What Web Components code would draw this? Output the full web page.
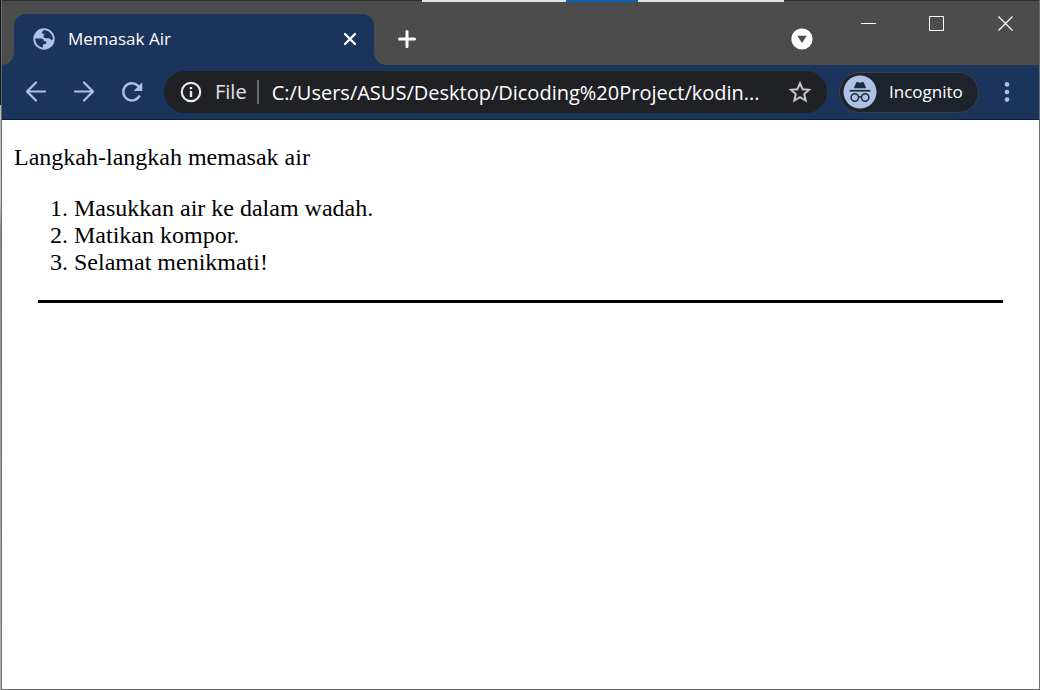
<!DOCTYPE html>
<html lang="id">
<head>
<meta charset="utf-8">
<title>Memasak Air</title>
<style>
html, body { height: 100%; margin: 0; }
body { background: #fff; }
</style>
</head>
<body>
<browser-window>
  <tab-strip slot="tabs"><browser-tab>Memasak Air</browser-tab></tab-strip>
  <nav-bar slot="toolbar"></nav-bar>
  <recipe-page></recipe-page>
</browser-window>

<script>
const define = (name, html) => customElements.define(name, class extends HTMLElement {
  constructor() {
    super();
    const t = document.createElement('template');
    t.innerHTML = html;
    this.attachShadow({ mode: 'open' }).append(t.content.cloneNode(true));
  }
});

const reset = `
  :host, * { box-sizing: border-box; }
  button { border: 0; padding: 0; margin: 0; background: none; color: inherit; font: inherit; display: grid; place-items: center; flex: none; }
  svg { display: block; }`;

define('browser-window', `<style>
  * { box-sizing: border-box; }
  :host { display: grid; grid-template-columns: 1px minmax(0, 1fr); min-height: 100%; height: 100%; }
  .behind { background: linear-gradient(#12161d 105px, #b9b9b9 105px, #c9c9c9 200px, #8e8e8e 230px, #b5b5b5); }
  .window { display: flex; flex-direction: column; border: 1px solid #6b6b6b; border-top: 0; background: #fff; }
  main { flex: 1; }
</style>
<div class="behind"></div>
<div class="window"><slot name="tabs"></slot><slot name="toolbar"></slot><main><slot></slot></main></div>`);

define('tab-strip', `<style>${reset}
  :host { display: block; background: #4c4c4c; color: #fff; }
  .edge { height: 2px; display: grid; grid-template-columns: 420fr 144fr 72fr 146fr 255fr; background: linear-gradient(#2e2e2e 1px, #4c4c4c 1px); }
  .edge i:nth-child(2), .edge i:nth-child(4) { background: #e4e4e4; }
  .edge i:nth-child(3) { background: #0d62b3; }
  .row { display: flex; height: 63px; padding-left: 12px; }
  .tabs { display: flex; padding-top: 12px; }
  .new { width: 32px; height: 32px; margin: 21px 0 0 17px; }
  .space { flex: 1; }
  .search { width: 32px; height: 32px; margin: 21px 17px 0 0; }
  .controls { display: flex; height: 42px; }
  .controls button { width: 68px; }
</style>
<div class="edge"><i></i><i></i><i></i><i></i><i></i></div>
<div class="row">
  <div class="tabs"><slot></slot></div>
  <button class="new" aria-label="New tab"><svg width="20" height="20" viewBox="0 0 20 20" stroke="#fff" stroke-width="3" stroke-linecap="round"><path d="M2.5 10h15M10 2.5v15"/></svg></button>
  <div class="space"></div>
  <button class="search" aria-label="Search tabs"><svg width="22" height="22" viewBox="0 0 22 22"><circle cx="11" cy="11" r="10.6" fill="#fff"/><path d="M6.3 7.7h9.4L11 15z" fill="#4c4c4c"/></svg></button>
  <div class="controls">
    <button aria-label="Minimize"><svg width="16" height="16"><path d="M0 8.5h15" stroke="#fff"/></svg></button>
    <button aria-label="Maximize"><svg width="16" height="16"><path d="M.5 1.5h14v14H.5z" fill="none" stroke="#fff"/></svg></button>
    <button aria-label="Close"><svg width="16" height="16"><path d="M1.5 1.500l14 14M15.500 1.500l-14 14" stroke="#fff" stroke-width="1.2"/></svg></button>
  </div>
</div>`);

define('browser-tab', `<style>${reset}
  :host { position: relative; display: flex; align-items: center; width: 360px; height: 51px; padding: 0 8px 2px 18px; border-radius: 12px 12px 0 0; background: #1a345b; color: #fff; font: 17px/24px "Open Sans", "Noto Sans", sans-serif; }
  :host::before, :host::after { content: ""; position: absolute; bottom: 0; width: 12px; height: 12px; }
  :host::before { right: 100%; background: radial-gradient(circle at 0 0, transparent 11.5px, #1a345b 12px); }
  :host::after { left: 100%; background: radial-gradient(circle at 100% 0, transparent 11.5px, #1a345b 12px); }
  .title { flex: 1; margin-left: 12px; white-space: nowrap; }
  button { width: 32px; height: 32px; }
</style>
<svg width="24" height="24" viewBox="0 0 24 24"><circle cx="12" cy="12" r="10.7" fill="#adc1e4"/><path d="M3.200 11.600h5.600c1.900 0 3 1 3.100 2.600h2.300c.6 1.600-.2 2.800-2 3.100l-1.300.3v3C6.700 20.300 3.200 16.500 3.200 11.600zM11.600 3.300c4.300-.2 7.700 2.400 8.800 6.200.4 1.300.5 2.200.4 3.300h-1.500c-1-.1-1.200-1-2-1.500h-2.900c-1.700 0-3-.8-3-2.200 0-1 .6-1.700 1.500-1.900l-2.400-.6-.9-1.200z" fill="#1a345b"/></svg>
<span class="title"><slot></slot></span>
<button aria-label="Close tab"><svg width="14" height="14" viewBox="0 0 14 14" stroke="#fff" stroke-width="2.300" stroke-linecap="round"><path d="M2 2l10 10M12 2L2 12"/></svg></button>`);

define('nav-bar', `<style>${reset}
  :host { display: flex; align-items: center; height: 55px; padding: 0 12px 0 10px; background: #1a345b; border-bottom: 1px solid #10203a; font-family: "Open Sans", "Noto Sans", sans-serif; color: #fff; }
  .nav { width: 48px; height: 42px; }
  form { flex: 1; min-width: 0; display: flex; align-items: center; height: 42px; margin: 0 12px 0 8px; padding: 0 10px 0 15px; border-radius: 21px; background: #202124; }
  .info { display: flex; align-items: center; gap: 12px; font-size: 20px; line-height: 28px; color: #e2e3e6; }
  .rule { width: 2px; height: 24px; margin: 0 13px 0 10px; background: #6c6d70; }
  input { flex: 1; min-width: 0; height: 32px; padding: 0; border: 0; outline: 0; background: none; color: #fff; font: 20px/28px "Open Sans", "Noto Sans", sans-serif; }
  .star { width: 34px; height: 34px; }
  .profile { display: flex; align-items: center; width: 140px; height: 41px; padding-left: 3px; gap: 12px; border: 1px solid #3d4247; border-radius: 21px; background: #1e232d; font-size: 17px; line-height: 24px; }
  .menu { width: 40px; height: 42px; margin-left: 8px; }
</style>
<button class="nav" aria-label="Back"><svg width="24" height="24" viewBox="0 0 24 24" fill="none" stroke="#adc1e4" stroke-width="2.200" stroke-linecap="round" stroke-linejoin="round"><path d="M21 11.500H3.500M12 2.500l-9 9 9 9"/></svg></button>
<button class="nav" aria-label="Forward"><svg width="24" height="24" viewBox="0 0 24 24" fill="none" stroke="#adc1e4" stroke-width="2.200" stroke-linecap="round" stroke-linejoin="round"><path d="M3 11.500h17.500M12 2.500l9 9-9 9"/></svg></button>
<button class="nav" aria-label="Reload"><svg width="24" height="24" viewBox="0 0 24 24"><path d="M19.700 15.500A8.600 8.600 0 1 1 18 5.800l1.600 1.600" fill="none" stroke="#adc1e4" stroke-width="2.400"/><path d="M22.300 2.200v8.700h-8.700z" fill="#adc1e4"/></svg></button>
<form onsubmit="return false">
  <button type="button" class="info"><svg width="24" height="24" viewBox="0 0 24 24"><circle cx="12" cy="12" r="9.200" fill="none" stroke="#e8e8e8" stroke-width="2.200"/><path d="M10.800 11h2.400v6h-2.400zM10.800 7h2.400v2.300h-2.400z" fill="#e8e8e8"/></svg><span>File</span></button>
  <span class="rule"></span>
  <input type="text" aria-label="Address" value="C:/Users/ASUS/Desktop/Dicoding%20Project/kodin...">
  <button type="button" class="star" aria-label="Bookmark"><svg width="24" height="24" viewBox="0 0 24 24" fill="none" stroke="#c6c6c8" stroke-width="2"><path d="M12 3.200l2.600 6 6.500.6-4.900 4.300 1.500 6.400-5.700-3.400-5.700 3.400 1.500-6.400-4.900-4.300 6.500-.6z"/></svg></button>
</form>
<button class="profile"><svg width="34" height="34" viewBox="0 0 34 34"><circle cx="17" cy="17" r="16.500" fill="#adc1e4"/><g fill="#1e2a3d"><path d="M10.800 13.300l2.200-5.400c.3-.8 1-1 1.800-.7l2.200.6 2.200-.6c.8-.3 1.500-.1 1.800.7l2.200 5.400z"/><path d="M6.600 14.900h20.800v1.700H6.600z"/></g><g fill="none" stroke="#1e2a3d" stroke-width="1.500"><circle cx="11.800" cy="22.500" r="3.700"/><circle cx="22.200" cy="22.500" r="3.700"/><path d="M15.500 22.200q1.500-1 3 0"/></g></svg><span>Incognito</span></button>
<button class="menu" aria-label="Menu"><svg width="6" height="20" fill="#adc1e4"><circle cx="3" cy="2.400" r="2.300"/><circle cx="3" cy="10" r="2.300"/><circle cx="3" cy="17.600" r="2.300"/></svg></button>`);

define('recipe-page', `<style>
  :host { display: block; padding: 24px 12px; background: #fff; color: #000; font: 24px/27px "Liberation Serif", serif; }
  p { margin: 0; }
  ol { margin: 24px 0; padding-left: 60px; }
  hr { margin: 0 24px; border: 0; height: 3px; background: #000; }
</style>
<p>Langkah-langkah memasak air</p>
<ol><li>Masukkan air ke dalam wadah.</li><li>Matikan kompor.</li><li>Selamat menikmati!</li></ol>
<hr>`);
</script>
</body>
</html>
